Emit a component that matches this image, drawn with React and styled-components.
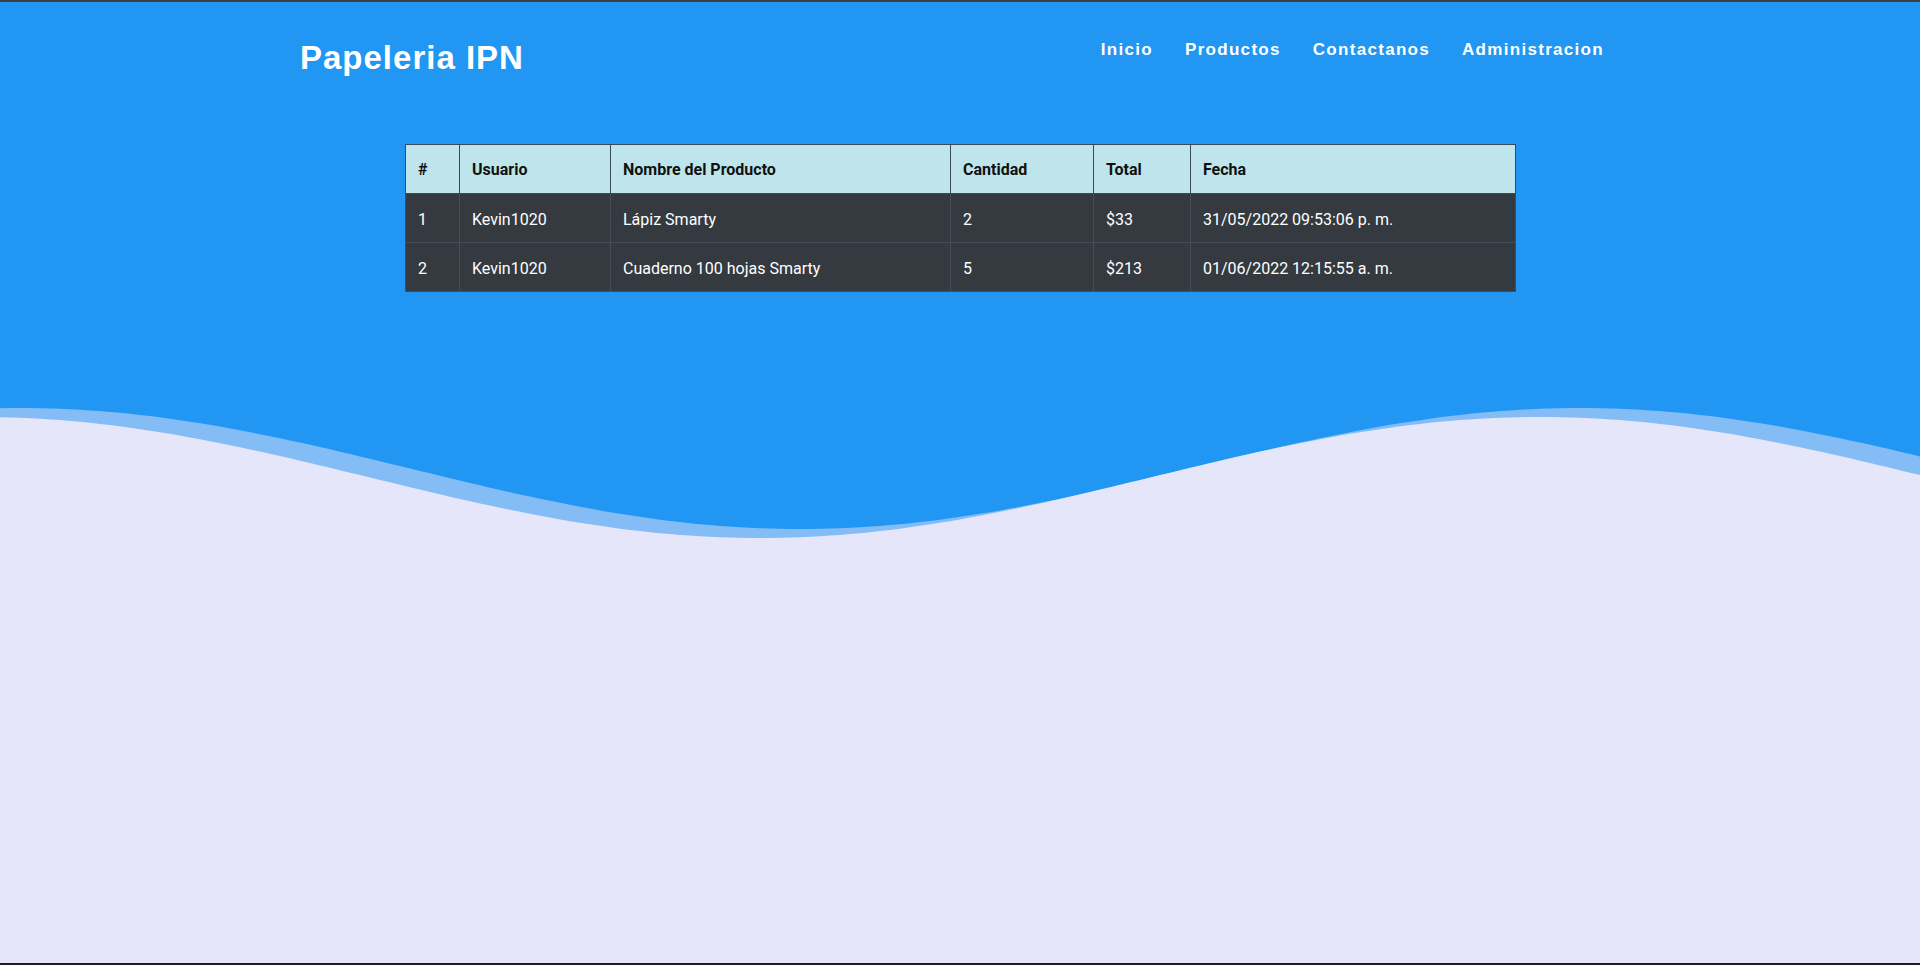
import styled, { createGlobalStyle } from 'styled-components';

const GlobalStyle = createGlobalStyle`
  html, body {
    margin: 0;
    padding: 0;
  }
  body {
    background: #e6e6fa;
    font-family: 'Liberation Sans', Arial, sans-serif;
  }
  * {
    box-sizing: border-box;
  }
`;

const Page = styled.div`
  min-height: 100vh;
  display: flex;
  flex-direction: column;
  border-top: 2px solid #3b4045;
  border-bottom: 2px solid #1b1b2b;
  background: #e6e6fa;
`;

const Hero = styled.header`
  background: #2196f3;
  display: flex;
  flex-direction: column;
`;

const TopBar = styled.div`
  width: 1320px;
  margin: 0 auto;
  padding-top: 36px;
  display: flex;
  justify-content: space-between;
  align-items: flex-start;
`;

const Brand = styled.h1`
  margin: 0;
  font-family: 'Liberation Sans', Arial, sans-serif;
  font-size: 33px;
  line-height: 40px;
  font-weight: 700;
  letter-spacing: 1px;
  color: #fff;
`;

const NavList = styled.nav`
  display: flex;
  padding-top: 1px;
`;

const NavLink = styled.a`
  padding: 0 16px;
  font-family: 'Liberation Sans', Arial, sans-serif;
  font-size: 17px;
  line-height: 22px;
  font-weight: 700;
  letter-spacing: 1.3px;
  color: #fff;
  text-decoration: none;
  cursor: pointer;
`;

const TableWrap = styled.div`
  width: 1110px;
  margin: 66px auto 108px auto;
`;

const Table = styled.table`
  width: 100%;
  table-layout: fixed;
  border-collapse: collapse;
  font-family: Roboto, 'Segoe UI', sans-serif;
  font-size: 16px;
  line-height: 24px;
  border: 1px solid #2f3a42;
`;

const Th = styled.th`
  width: ${(p) => p.$w}px;
  padding: 13px 12px 11px 12px;
  text-align: left;
  font-weight: 700;
  color: #111;
  background: #bee5eb;
  border: 1px solid #3a4a55;
`;

const Td = styled.td`
  padding: 14px 12px 10px 12px;
  color: #fff;
  background: #343a40;
  border: 1px solid #454d55;
`;

const WaveSvg = styled.svg`
  display: block;
  width: 100%;
  height: 145px;
`;

// wave top edge 400px down the page; both lines follow the same cosine,
// the lavender one shifted 40px left and 9px down
const TOP = 400;
const waveY = (x) => 468.5 + 60.5 * Math.cos((Math.PI * (x - 800)) / 780) - TOP;

const wavePath = (shift, drop) => {
  let d = 'M0,145';
  for (let x = 0; x <= 1920; x += 10) {
    d += ` L${x},${(waveY(x + shift) + drop).toFixed(2)}`;
  }
  return d + ' L1920,145 Z';
};

const Wave = () => (
  <WaveSvg viewBox="0 0 1920 145" preserveAspectRatio="none">
    <path d={wavePath(0, 0)} fill="#84bdf6" />
    <path d={wavePath(40, 9)} fill="#e6e6fa" />
  </WaveSvg>
);

const columns = [
  { label: '#', w: 54 },
  { label: 'Usuario', w: 151 },
  { label: 'Nombre del Producto', w: 340 },
  { label: 'Cantidad', w: 143 },
  { label: 'Total', w: 97 },
  { label: 'Fecha', w: 325 },
];

const rows = [
  ['1', 'Kevin1020', 'Lápiz Smarty', '2', '$33', '31/05/2022 09:53:06 p. m.'],
  ['2', 'Kevin1020', 'Cuaderno 100 hojas Smarty', '5', '$213', '01/06/2022 12:15:55 a. m.'],
];

const App = () => {
  return (
    <Page>
      <GlobalStyle />
      <Hero>
        <TopBar>
          <Brand>Papeleria IPN</Brand>
          <NavList>
            <NavLink>Inicio</NavLink>
            <NavLink>Productos</NavLink>
            <NavLink>Contactanos</NavLink>
            <NavLink>Administracion</NavLink>
          </NavList>
        </TopBar>
        <TableWrap>
          <Table>
            <thead>
              <tr>
                {columns.map((c) => (
                  <Th key={c.label} $w={c.w}>
                    {c.label}
                  </Th>
                ))}
              </tr>
            </thead>
            <tbody>
              {rows.map((r) => (
                <tr key={r[0]}>
                  {r.map((cell, i) => (
                    <Td key={i}>{cell}</Td>
                  ))}
                </tr>
              ))}
            </tbody>
          </Table>
        </TableWrap>
        <Wave />
      </Hero>
    </Page>
  );
};

export default App;
